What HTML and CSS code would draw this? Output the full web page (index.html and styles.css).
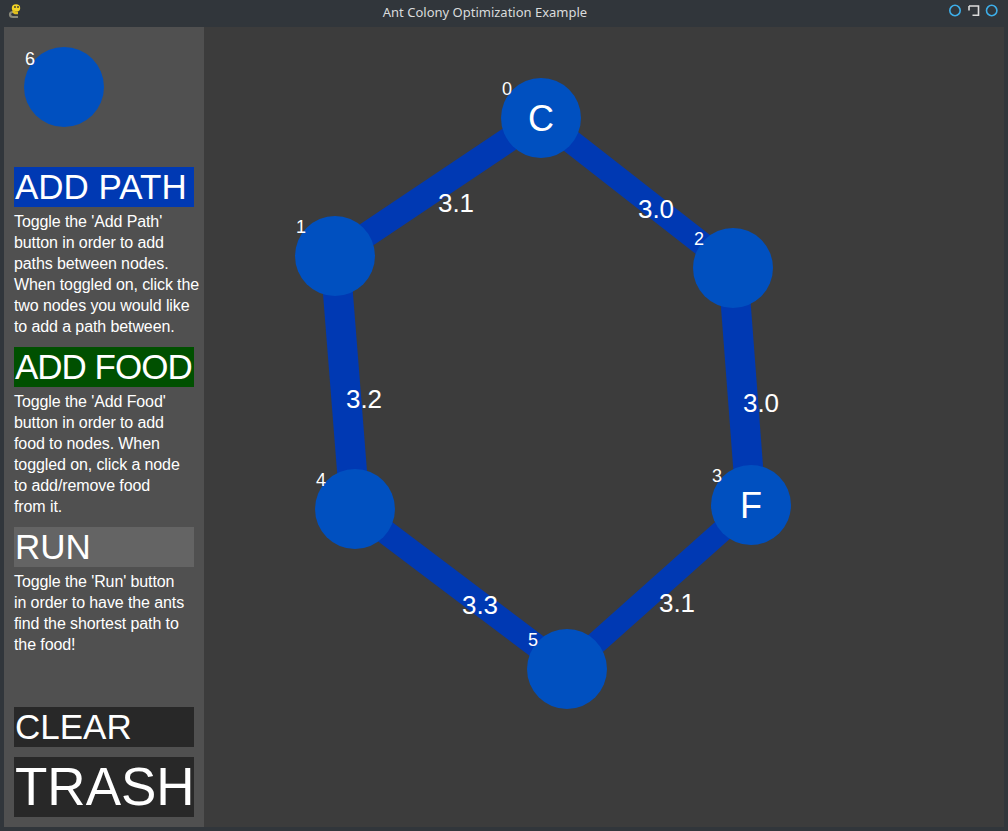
FILE: index.html
```html
<!DOCTYPE html>
<html lang="en">
<head>
<meta charset="utf-8">
<title>Ant Colony Optimization Example</title>
<link rel="stylesheet" href="styles.css">
</head>
<body>
<div class="window">
  <header class="titlebar">
    <div class="tb-left">
      <svg class="app-icon" width="28" height="27" viewBox="0 0 28 27">
        <path d="M13 12 q-3 0 -3 2.5 q0 2.5 3 2.5 h5" fill="none" stroke="#8a8a7a" stroke-width="2.2"/>
        <ellipse cx="16" cy="8" rx="4.2" ry="3.8" fill="#f2d325"/>
        <path d="M14 10 q-1 2 1 3 h3" fill="none" stroke="#e0c020" stroke-width="2.5"/>
        <circle cx="15" cy="7" r="0.9" fill="#333"/>
        <circle cx="18" cy="7" r="0.9" fill="#333"/>
      </svg>
    </div>
    <div class="tb-title">Ant Colony Optimization Example</div>
    <div class="tb-right">
      <svg width="66" height="27" viewBox="0 0 66 27">
        <circle cx="13" cy="10.5" r="5.2" fill="none" stroke="#3daee9" stroke-width="1.6"/>
        <path d="M27 6 H36.5 V15.2 H30.5 M27 6 V10.5" fill="none" stroke="#dcdcdc" stroke-width="1.6"/>
        <circle cx="49.7" cy="10.5" r="5.2" fill="none" stroke="#3daee9" stroke-width="1.6"/>
      </svg>
    </div>
  </header>

  <div class="main">
    <aside class="sidebar">
      <svg class="preview" width="200" height="140" viewBox="4 27 200 140">
        <circle cx="64" cy="87" r="40" fill="#0050c0"/>
        <text class="idx" x="25" y="65">6</text>
      </svg>

      <div class="btn btn-path">ADD PATH</div>
      <p class="desc">Toggle the 'Add Path'<br>button in order to add<br>paths between nodes.<br>When toggled on, click the<br>two nodes you would like<br>to add a path between.</p>

      <div class="btn btn-food">ADD FOOD</div>
      <p class="desc">Toggle the 'Add Food'<br>button in order to add<br>food to nodes. When<br>toggled on, click a node<br>to add/remove food<br>from it.</p>

      <div class="btn btn-run">RUN</div>
      <p class="desc">Toggle the 'Run' button<br>in order to have the ants<br>find the shortest path to<br>the food!</p>

      <div class="btn btn-clear">CLEAR</div>
      <div class="btn btn-trash">TRASH</div>
    </aside>

    <section class="canvas">
      <svg class="graph" width="800" height="800" viewBox="204 27 800 800">
        <g class="edges">
          <polygon points="541,103 335,241 335,271 541,133"/>
          <polygon points="541,103 733,253 733,283 541,133"/>
          <polygon points="320,256 350,256 370,509 340,509"/>
          <polygon points="718,268 748,268 766,505 736,505"/>
          <polygon points="355,494 567,654 567,684 355,524"/>
          <polygon points="751,490 567,654 567,684 751,520"/>
        </g>
        <g class="weights">
          <text x="456" y="212">3.1</text>
          <text x="656" y="218">3.0</text>
          <text x="364" y="408">3.2</text>
          <text x="761" y="412">3.0</text>
          <text x="480" y="614">3.3</text>
          <text x="677" y="612">3.1</text>
        </g>
        <g class="nodes">
          <circle cx="541" cy="118" r="40"/>
          <circle cx="335" cy="256" r="40"/>
          <circle cx="733" cy="268" r="40"/>
          <circle cx="751" cy="505" r="40"/>
          <circle cx="355" cy="509" r="40"/>
          <circle cx="567" cy="669" r="40"/>
        </g>
        <g class="labels">
          <text x="541" y="131">C</text>
          <text x="751" y="518">F</text>
        </g>
        <g class="indices">
          <text class="idx" x="502" y="95">0</text>
          <text class="idx" x="296" y="233">1</text>
          <text class="idx" x="694" y="245">2</text>
          <text class="idx" x="712" y="482">3</text>
          <text class="idx" x="316" y="486">4</text>
          <text class="idx" x="528" y="646">5</text>
        </g>
      </svg>
    </section>
  </div>
</div>
</body>
</html>
```

FILE: styles.css
```css
* {
  box-sizing: border-box;
}

html, body {
  margin: 0;
  padding: 0;
}

body {
  background: #31363b;
  width: 1008px;
  height: 831px;
  overflow: hidden;
  font-family: "Liberation Sans", Arial, sans-serif;
}

.window {
  display: flex;
  flex-direction: column;
  width: 1008px;
  height: 831px;
}

.titlebar {
  display: flex;
  align-items: center;
  height: 27px;
  background: #31363b;
}

.tb-left {
  width: 28px;
  height: 27px;
}

.app-icon {
  display: block;
}

.tb-title {
  flex: 1;
  text-align: center;
  font-family: "Noto Sans", sans-serif;
  font-size: 13px;
  line-height: 27px;
  color: #dadcdd;
  padding-bottom: 3px;
}

.tb-right {
  width: 66px;
  height: 27px;
}

.tb-right svg {
  display: block;
}

.main {
  display: flex;
  padding: 0 4px 4px 4px;
  height: 804px;
}

.sidebar {
  width: 200px;
  height: 800px;
  background: #505050;
  display: flex;
  flex-direction: column;
  padding-bottom: 10px;
}

.preview {
  display: block;
  flex: none;
}

.idx {
  font-family: "Liberation Sans", Arial, sans-serif;
  font-size: 18px;
  fill: #ffffff;
}

.btn {
  flex: none;
  margin: 0 10px;
  height: 40px;
  line-height: 39px;
  font-size: 35px;
  color: #ffffff;
  padding-left: 1px;
  white-space: nowrap;
  overflow: hidden;
}

.btn-path {
  background: #0039b3;
}

.btn-food {
  background: #005000;
  letter-spacing: -1px;
}

.btn-run {
  background: #646464;
}

.btn-clear {
  background: #282828;
  margin-top: auto;
}

.btn-trash {
  background: #282828;
  margin-top: 10px;
  height: 60px;
  line-height: 59px;
  font-size: 53px;
}

.desc {
  margin: 4px 10px 10px 10px;
  font-size: 16px;
  line-height: 21px;
  color: #ffffff;
  white-space: nowrap;
  letter-spacing: -0.1px;
}

.canvas {
  width: 800px;
  height: 800px;
  background: #3c3c3c;
}

.graph {
  display: block;
}

.edges polygon {
  fill: #0039b3;
}

.nodes circle {
  fill: #0050c0;
}

.weights text {
  font-family: "Liberation Sans", Arial, sans-serif;
  font-size: 26px;
  fill: #ffffff;
  text-anchor: middle;
}

.labels text {
  font-family: "Liberation Sans", Arial, sans-serif;
  font-size: 36px;
  fill: #ffffff;
  text-anchor: middle;
}
```
